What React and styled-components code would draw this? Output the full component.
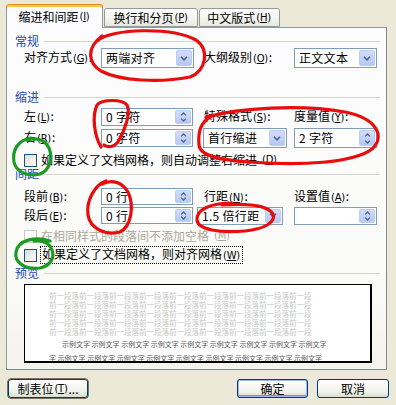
import React from "react";
import styled, { createGlobalStyle } from "styled-components";

const GlobalStyle = createGlobalStyle`
  html, body { margin: 0; padding: 0; background: #ece9d8; }
  body {
    font-family: "Noto Sans CJK SC", "DejaVu Sans", sans-serif;
    font-size: 12px;
    line-height: 14px;
    color: #000;
  }
`;

const tabs = [
  { label: "缩进和间距", key: "I", width: 97, active: true },
  { label: "换行和分页", key: "P", width: 94 },
  { label: "中文版式", key: "H", width: 81 },
];

const before = "前一段落".repeat(10).slice(0, 35);
const sample = "示例文字 ".repeat(9);

function Key({ k }) {
  return (
    <KeyText>
      (<u>{k}</u>)
    </KeyText>
  );
}

function Chevron({ up }) {
  return (
    <svg width="8" height="5" viewBox="0 0 8 5">
      <path
        d={up ? "M1 4.2 L4 1.2 L7 4.2" : "M1 0.8 L4 3.8 L7 0.8"}
        stroke="#4d6185"
        strokeWidth="1.6"
        fill="none"
      />
    </svg>
  );
}

function Select({ value, width, height, offset }) {
  return (
    <SelectBox $w={width} $h={height} $ml={offset}>
      <Value>{value}</Value>
      <DropButton>
        <Chevron />
      </DropButton>
    </SelectBox>
  );
}

function Spin({ value, width, height }) {
  return (
    <SelectBox $w={width} $h={height}>
      <Value>{value}</Value>
      <SpinButtons>
        <SpinHalf>
          <Chevron up />
        </SpinHalf>
        <SpinHalf>
          <Chevron />
        </SpinHalf>
      </SpinButtons>
    </SelectBox>
  );
}

function Header({ children, top }) {
  return (
    <HeaderRow $top={top}>
      <HeaderText>{children}</HeaderText>
      <HeaderLine />
    </HeaderRow>
  );
}

export default function App() {
  return (
    <>
      <GlobalStyle />
      <Dialog>
        <TabStrip>
          {tabs.map((t) => (
            <Tab key={t.key} $w={t.width} $active={t.active}>
              {t.label}
              <Key k={t.key} />
            </Tab>
          ))}
        </TabStrip>

        <Panel>
          <Header top={0}>常规</Header>
          <FormGrid $top={0} $rows="20px">
            <Label>
              对齐方式<Key k="G" />:
            </Label>
            <Select value="两端对齐" width={93} height={20} />
            <Label $pad={11}>
              大纲级别<Key k="O" />:
            </Label>
            <Select value="正文文本" width={83} height={20} />
          </FormGrid>

          <Header top={22}>缩进</Header>
          <FormGrid $top={3} $rows="20px 20px" $gap={1}>
            <Label>
              左<Key k="L" />:
            </Label>
            <Spin value="0 字符" width={92} height={18} />
            <Label $pad={11}>
              特殊格式<Key k="S" />:
            </Label>
            <Label>
              度量值<Key k="Y" />:
            </Label>
            <Label>
              右<Key k="R" />:
            </Label>
            <Spin value="0 字符" width={92} height={18} />
            <Select value="首行缩进" width={84} height={20} offset={10} />
            <Spin value="2 字符" width={83} height={20} />
          </FormGrid>

          <CheckRow $top={5}>
            <CheckBox />
            如果定义了文档网格，则自动调整右缩进<Key k="D" />
          </CheckRow>

          <Header top={0}>间距</Header>
          <FormGrid $top={6} $rows="19px 19px">
            <Label>
              段前<Key k="B" />:
            </Label>
            <Spin value="0 行" width={92} height={17} />
            <Label $pad={11}>
              行距<Key k="N" />:
            </Label>
            <Label>
              设置值<Key k="A" />:
            </Label>
            <Label>
              段后<Key k="E" />:
            </Label>
            <Spin value="0 行" width={92} height={17} />
            <Select value="1.5 倍行距" width={86} height={18} offset={4} />
            <Spin value="" width={83} height={18} />
          </FormGrid>

          <CheckRow $top={4} $disabled>
            <CheckBox $disabled />
            在相同样式的段落间不添加空格<Key k="M" />
          </CheckRow>
          <CheckRow $top={5}>
            <CheckBox />
            <Focus>
              如果定义了文档网格，则对齐网格<Key k="W" />
            </Focus>
          </CheckRow>

          <Header top={4}>预览</Header>
          <Preview>
            {[0, 1, 2, 3, 4].map((i) => (
              <GhostLine key={i}>{before}</GhostLine>
            ))}
            <SampleLine $indent={13} $top={4}>
              {sample}
            </SampleLine>
            <SampleLine $indent={0} $top={5}>
              {"字 " + sample}
            </SampleLine>
          </Preview>
        </Panel>

        <Footer>
          <Button $w={80} $focus>
            制表位<Key k="T" />...
          </Button>
          <Spacer />
          <Button $w={71} $default>
            确定
          </Button>
          <Button $w={72}>取消</Button>
        </Footer>

        <Marks viewBox="0 0 396 405">
          <g stroke="#e80c0c" strokeWidth="3.2" fill="none" strokeLinecap="round">
            <path d="M97,41 C112,28 172,27 196,40 C210,50 206,71 190,77 C160,83 120,81 101,71 C88,63 86,48 102,36" />
            <path d="M101,147 C94,135 92,116 97,105 C102,99 122,99 127,105 C131,113 125,130 118,142 C114,147 108,148 104,145" />
            <path d="M206,117 C240,108 300,104 345,112 C376,118 386,136 372,149 C354,163 300,166 250,162 C220,160 200,156 199,145 C198,132 200,122 212,116" />
            <path d="M106,181 C95,185 86,200 88,215 C90,228 105,236 120,232 C132,226 134,205 128,192 C122,182 112,179 102,184" />
            <path d="M232,203 C210,203 196,210 197,220 C198,230 220,233 245,231 C265,229 276,222 273,214 C268,206 250,203 222,205" />
          </g>
          <g stroke="#1c9a22" strokeWidth="3.2" fill="none" strokeLinecap="round">
            <path d="M31,138 C18,140 12,150 14,162 C16,172 28,177 40,174 C50,170 53,158 49,148 C45,140 38,137 27,140" />
            <path d="M50,241 C35,236 18,240 16,252 C14,263 26,270 40,268 C50,266 55,258 52,250 C50,244 44,240 34,241" />
          </g>
        </Marks>
      </Dialog>
    </>
  );
}

const Dialog = styled.div`
  position: relative;
  width: 396px;
  height: 405px;
  box-sizing: border-box;
  padding: 4px 9px 0 6px;
  background: #ece9d8;
  display: flex;
  flex-direction: column;
  overflow: hidden;
`;

const TabStrip = styled.div`
  display: flex;
  align-items: flex-end;
  height: 23px;
  flex: none;
  gap: 1px;
  position: relative;
  z-index: 1;
`;

const Tab = styled.div`
  width: ${(p) => p.$w}px;
  height: ${(p) => (p.$active ? 24 : 19)}px;
  margin-bottom: ${(p) => (p.$active ? -1 : 0)}px;
  box-sizing: border-box;
  border: 1px solid #919b9c;
  border-bottom: ${(p) => (p.$active ? "none" : "1px solid #919b9c")};
  border-top-color: ${(p) => (p.$active ? "#e68b2c" : "#919b9c")};
  border-radius: 3px 3px 0 0;
  background: ${(p) =>
    p.$active ? "#fcfcfe" : "linear-gradient(#ffffff, #f4f3ee 60%, #e8e7df)"};
  box-shadow: ${(p) => (p.$active ? "inset 0 2px 0 #ffc83c" : "none")};
  display: flex;
  align-items: center;
  justify-content: center;
  padding-top: ${(p) => (p.$active ? 0 : 1)}px;
  white-space: nowrap;
`;

const KeyText = styled.span`
  font-family: "DejaVu Sans", sans-serif;
  font-size: 10px;
  letter-spacing: -0.3px;
  margin: 0 1px;
`;

const Panel = styled.div`
  height: 343px;
  flex: none;
  box-sizing: border-box;
  border: 1px solid #919b9c;
  border-right-color: #7f8a8b;
  border-bottom-color: #7f8a8b;
  background: linear-gradient(#fcfcfe, #fbfbf8 70%, #f4f3ee);
  display: flex;
  flex-direction: column;
  padding: 6px 6px 0 8px;
`;

const HeaderRow = styled.div`
  display: flex;
  align-items: center;
  height: 14px;
  flex: none;
  margin-top: ${(p) => p.$top || 0}px;
`;

const HeaderText = styled.span`
  color: #1f4bb4;
`;

const HeaderLine = styled.div`
  flex: 1;
  height: 1px;
  margin-left: 5px;
  background: #d6d5c9;
  box-shadow: 0 1px 0 #ffffff;
`;

const FormGrid = styled.div`
  display: grid;
  grid-template-columns: 77px 92px 101px 83px;
  grid-template-rows: ${(p) => p.$rows};
  row-gap: ${(p) => p.$gap || 0}px;
  align-items: center;
  flex: none;
  margin-top: ${(p) => p.$top}px;
  padding-left: 9px;
`;

const Label = styled.span`
  padding-left: ${(p) => p.$pad || 0}px;
  white-space: nowrap;
`;

const SelectBox = styled.div`
  width: ${(p) => p.$w}px;
  height: ${(p) => p.$h}px;
  margin-left: ${(p) => p.$ml || 0}px;
  box-sizing: border-box;
  border: 1px solid #7f9db9;
  background: #ffffff;
  display: flex;
  align-items: center;
  padding: 1px 1px 1px 4px;
`;

const Value = styled.span`
  flex: 1;
  white-space: pre;
  letter-spacing: 0.3px;
`;

const DropButton = styled.span`
  width: 16px;
  align-self: stretch;
  border-radius: 2px;
  border: 1px solid #bccdf5;
  box-sizing: border-box;
  background: linear-gradient(#d3ddf9, #b6c8f4);
  display: flex;
  align-items: center;
  justify-content: center;
`;

const SpinButtons = styled.span`
  width: 16px;
  align-self: stretch;
  display: flex;
  flex-direction: column;
  border-radius: 2px;
  border: 1px solid #bccdf5;
  box-sizing: border-box;
  background: linear-gradient(#d3ddf9, #b6c8f4);
`;

const SpinHalf = styled.span`
  flex: 1;
  display: flex;
  align-items: center;
  justify-content: center;

  svg {
    width: 7px;
    height: 4px;
  }
`;

const CheckRow = styled.div`
  display: flex;
  align-items: center;
  gap: 4px;
  height: 14px;
  flex: none;
  margin-top: ${(p) => p.$top}px;
  padding-left: 9px;
  color: ${(p) => (p.$disabled ? "#aca899" : "#000")};
  white-space: nowrap;
`;

const CheckBox = styled.span`
  width: 13px;
  height: 13px;
  box-sizing: border-box;
  border: 1px solid ${(p) => (p.$disabled ? "#cac8bb" : "#1c5180")};
  background: ${(p) =>
    p.$disabled ? "#ffffff" : "linear-gradient(135deg, #dcdcd7, #ffffff)"};
  flex: none;
`;

const Focus = styled.span`
  outline: 1px dotted #000;
  padding: 0 1px;
`;

const Preview = styled.div`
  margin: 4px 0 0 9px;
  width: 348px;
  height: 79px;
  flex: none;
  box-sizing: border-box;
  border: 1px solid #000;
  border-right-width: 2px;
  border-bottom-width: 2px;
  background: #ffffff;
  padding: 6px 0 0 24px;
  display: flex;
  flex-direction: column;
  overflow: hidden;
`;

const GhostLine = styled.div`
  width: 280px;
  height: 9px;
  line-height: 9px;
  font-size: 7.5px;
  color: #c9c9c9;
  white-space: nowrap;
  overflow: hidden;
  flex: none;
`;

const SampleLine = styled.div`
  width: ${(p) => 282 - p.$indent}px;
  margin-left: ${(p) => p.$indent}px;
  margin-top: ${(p) => p.$top}px;
  height: 9px;
  line-height: 9px;
  font-size: 7px;
  color: #555555;
  white-space: pre;
  overflow: hidden;
  flex: none;
`;

const Footer = styled.div`
  display: flex;
  align-items: center;
  gap: 9px;
  padding-top: 9px;
  margin: 0 -2px 0 2px;
`;

const Spacer = styled.div`
  flex: 1;
`;

const Button = styled.div`
  width: ${(p) => p.$w}px;
  height: 19px;
  box-sizing: border-box;
  border: 1px solid #003c74;
  border-radius: 3px;
  background: linear-gradient(#ffffff, #f2f1ea 70%, #dcdad0);
  box-shadow: ${(p) =>
    p.$default
      ? "inset 0 0 0 1px #9dbcf2, inset 0 -1px 0 1px #6f93d6"
      : p.$focus
      ? "0 0 0 0.5px #000"
      : "none"};
  display: flex;
  align-items: center;
  justify-content: center;
  white-space: nowrap;
`;

const Marks = styled.svg`
  position: absolute;
  left: 0;
  top: 0;
  width: 396px;
  height: 405px;
  pointer-events: none;
  z-index: 2;
`;
